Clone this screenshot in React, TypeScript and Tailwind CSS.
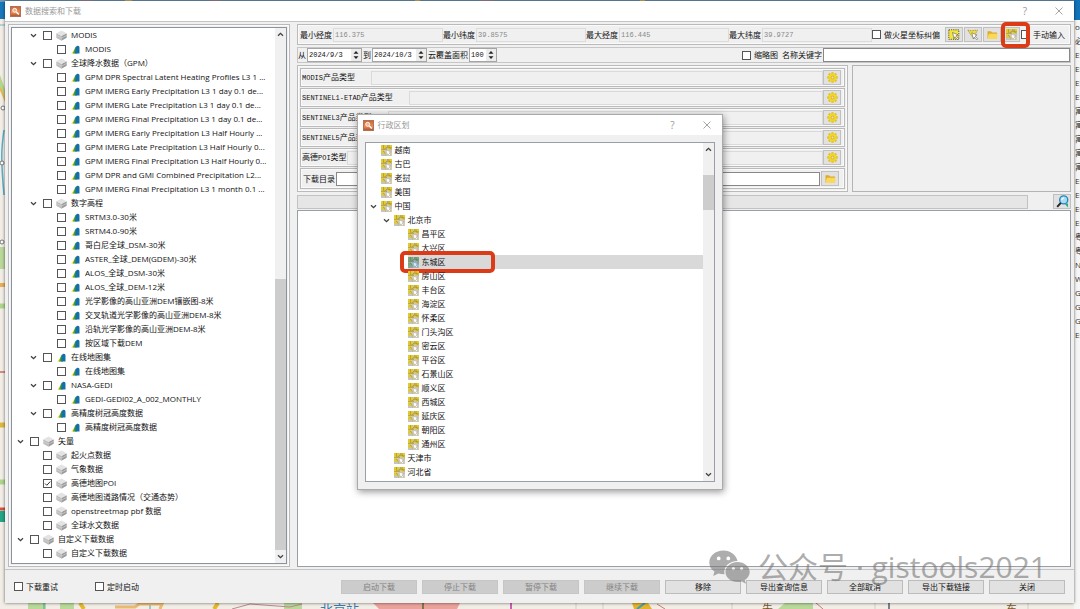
import React, { useState } from "react";

type IconKind = "layers" | "leaf";

interface TreeRow {
  level: number;
  label: string;
  icon: IconKind;
  open?: boolean;
  checked?: boolean;
}

const indent = ["pl-[5px]", "pl-[18px]", "pl-[32px]"];

const group = (level: number, label: string, icon: IconKind = "layers"): TreeRow => ({
  level,
  label,
  icon,
  open: true,
});

const leaf = (label: string): TreeRow => ({ level: 2, label, icon: "leaf" });

const vector = (label: string, checked = false): TreeRow => ({
  level: 1,
  label,
  icon: "layers",
  checked,
});

const dataTree: TreeRow[] = [
  group(1, "MODIS"),
  leaf("MODIS"),
  group(1, "全球降水数据（GPM）"),
  leaf("GPM DPR Spectral Latent Heating Profiles L3 1 ..."),
  leaf("GPM IMERG Early Precipitation L3 1 day 0.1 de..."),
  leaf("GPM IMERG Late Precipitation L3 1 day 0.1 de..."),
  leaf("GPM IMERG Final Precipitation L3 1 day 0.1 de..."),
  leaf("GPM IMERG Early Precipitation L3 Half Hourly ..."),
  leaf("GPM IMERG Late Precipitation L3 Half Hourly 0..."),
  leaf("GPM IMERG Final Precipitation L3 Half Hourly 0..."),
  leaf("GPM DPR and GMI Combined Precipitation L2..."),
  leaf("GPM IMERG Final Precipitation L3 1 month 0.1 ..."),
  group(1, "数字高程"),
  leaf("SRTM3.0-30米"),
  leaf("SRTM4.0-90米"),
  leaf("哥白尼全球_DSM-30米"),
  leaf("ASTER_全球_DEM(GDEM)-30米"),
  leaf("ALOS_全球_DSM-30米"),
  leaf("ALOS_全球_DEM-12米"),
  leaf("光学影像的高山亚洲DEM镶嵌图-8米"),
  leaf("交叉轨道光学影像的高山亚洲DEM-8米"),
  leaf("沿轨光学影像的高山亚洲DEM-8米"),
  leaf("按区域下载DEM"),
  group(1, "在线地图集", "leaf"),
  leaf("在线地图集"),
  group(1, "NASA-GEDI", "leaf"),
  leaf("GEDI-GEDI02_A_002_MONTHLY"),
  group(1, "高精度树冠高度数据", "leaf"),
  leaf("高精度树冠高度数据"),
  group(0, "矢量"),
  vector("起火点数据"),
  vector("气象数据"),
  vector("高德地图POI", true),
  vector("高德地图道路情况（交通态势）"),
  vector("openstreetmap pbf 数据"),
  vector("全球水文数据"),
  group(0, "自定义下载数据"),
  vector("自定义下载数据"),
];

const regions = [
  { level: 0, label: "越南" },
  { level: 0, label: "古巴" },
  { level: 0, label: "老挝" },
  { level: 0, label: "美国" },
  { level: 0, label: "中国", open: true },
  { level: 1, label: "北京市", open: true },
  { level: 2, label: "昌平区" },
  { level: 2, label: "大兴区" },
  { level: 2, label: "东城区" },
  { level: 2, label: "房山区" },
  { level: 2, label: "丰台区" },
  { level: 2, label: "海淀区" },
  { level: 2, label: "怀柔区" },
  { level: 2, label: "门头沟区" },
  { level: 2, label: "密云区" },
  { level: 2, label: "平谷区" },
  { level: 2, label: "石景山区" },
  { level: 2, label: "顺义区" },
  { level: 2, label: "西城区" },
  { level: 2, label: "延庆区" },
  { level: 2, label: "朝阳区" },
  { level: 2, label: "通州区" },
  { level: 1, label: "天津市" },
  { level: 1, label: "河北省" },
];

const products = [
  { latin: "MODIS", rest: "产品类型" },
  { latin: "SENTINEL1-ETAD", rest: "产品类型" },
  { latin: "SENTINEL3", rest: "产品类型" },
  { latin: "SENTINEL5", rest: "产品类型" },
];

const actions = [
  { label: "启动下载", disabled: true },
  { label: "停止下载", disabled: true },
  { label: "暂停下载", disabled: true },
  { label: "继续下载", disabled: true },
  { label: "移除" },
  { label: "导出查询信息" },
  { label: "全部取消" },
  { label: "导出下载链接" },
  { label: "关闭" },
];

const desktopList = [
  "op", "必", "ES", "ES", "ES", "ES", "寓", "寓", "寓", "寓", "寓", "Es",
  "Es", "Es", "Es", "粤", "粤", "N", "W", "Gl", "Gl", "Gl", "Es",
];

const frame = "border border-[#bababa] shadow-[inset_0_0_0_1px_#fafafa]";
const mono = "font-['Liberation_Mono','Noto_Sans_CJK_SC',monospace] text-[7px]";

const Chevron = ({ up = false }: { up?: boolean }) => (
  <svg className={up ? "size-[7px] rotate-180" : "size-[7px]"} viewBox="0 0 7 7" fill="none">
    <path d="M1 2.2 3.5 4.7 6 2.2" stroke="#404040" strokeWidth="1.3" />
  </svg>
);

const AppIcon = () => (
  <svg className="size-[11px] shrink-0" viewBox="0 0 11 11">
    <defs>
      <linearGradient id="appFill" x1="0" y1="0" x2="0" y2="1">
        <stop offset="0" stopColor="#c9653a" />
        <stop offset=".6" stopColor="#ee8a4e" />
        <stop offset="1" stopColor="#a8502d" />
      </linearGradient>
    </defs>
    <rect x=".5" y=".5" width="10" height="10" fill="url(#appFill)" stroke="#b0715a" />
    <circle cx="4.7" cy="4.3" r="2" fill="#f3b18d" stroke="#fff" strokeWidth=".9" />
    <path d="m6.3 6 2.5 2.6" stroke="#fff" strokeWidth="1.4" />
  </svg>
);

const LayersIcon = () => (
  <svg className="size-[11px] shrink-0" viewBox="0 0 11 11">
    <path d="M.3 3.2v4.6l5.2 2.9V5.8z" fill="#bdbdbd" />
    <path d="M10.700 3.2v4.600L5.500 10.700V5.800z" fill="#9c9c9c" />
    <path d="M5.500.6.300 3.200l5.200 2.700 5.200-2.700z" fill="#e3e3e3" />
    <path d="m.3 5.400 5.200 2.700 5.200-2.700" stroke="#d8d8d8" strokeWidth=".6" fill="none" />
  </svg>
);

const LeafIcon = () => (
  <svg className="size-[9px] shrink-0" viewBox="0 0 9 9">
    <path d="M.2 8.600C2 7 2.600 5.500 3.200 4L4.200 8.600z" fill="#e8d51c" />
    <path d="M2 8.600C3.300 6 3.200 3.200 5 1.500l1 7.100z" fill="#3f9b3c" />
    <path d="M4 8.600C4.800 5.500 4 1 6.500.7c1.400-.2 2 .6 2 2v5.900z" fill="#1670a8" />
  </svg>
);

const RegionIcon = ({ active = false }: { active?: boolean }) => (
  <svg className="size-[11px] shrink-0" viewBox="0 0 11 11">
    <rect width="11" height="11" fill={active ? "#a9b9b4" : "#d6cfae"} />
    <path
      d="M0 0h5v4H0zM6.500 0H11v3.500L7.500 5zM0 5.500h3L4.500 9H0zM4.500 4.500 7 6v2z"
      fill={active ? "#7fa672" : "#e2c92c"}
    />
    <path
      d="M2.500 0v3.500L5.500 5l1-5M0 4.500h3.500L6 2l5 1M4 11V7.500L2 6M8 0v2.500L11 5"
      stroke={active ? "#56796e" : "#a18b2a"}
      strokeWidth=".6"
      fill="none"
    />
    <path d="M0 8.500h4v2.500H0zM8.500 4.500H11v3H8.500z" fill={active ? "#8ea2a6" : "#c4c4c0"} />
    <path d="m5 5 5 2-2 1 2 2-1 .8-2-2-.8 1.600z" fill={active ? "#d5ecfa" : "#fff"} stroke={active ? "#5b93bb" : "#9a9a9a"} strokeWidth=".4" />
  </svg>
);

const GearIcon = () => (
  <svg className="size-[11px]" viewBox="0 0 11 11">
    <g fill="#e4bd16">
      <rect x="4.300" y=".2" width="2.400" height="10.600" rx=".6" />
      <rect x="4.300" y=".2" width="2.400" height="10.600" rx=".6" transform="rotate(45 5.5 5.5)" />
      <rect x="4.300" y=".2" width="2.400" height="10.600" rx=".6" transform="rotate(90 5.5 5.5)" />
      <rect x="4.300" y=".2" width="2.400" height="10.600" rx=".6" transform="rotate(135 5.5 5.5)" />
    </g>
    <circle cx="5.500" cy="5.500" r="4" fill="#f0d52c" />
    <circle cx="5.500" cy="5.500" r="1.300" fill="#e8e6da" stroke="#c49c12" strokeWidth=".6" />
  </svg>
);

const FolderIcon = () => (
  <svg className="h-[10px] w-[11px]" viewBox="0 0 11 10">
    <path d="M.5 9V1.200h3.500l1 1.200h5V9z" fill="#dfab2c" />
    <path d="M.5 9 1.800 3.700h9L9.800 9z" fill="#fad958" />
  </svg>
);

const SelectIcon = () => (
  <svg className="size-[12px]" viewBox="0 0 12 12">
    <rect x=".8" y=".8" width="10" height="9.500" fill="#f5e53c" stroke="#4a4a35" strokeWidth=".9" strokeDasharray="1.2 1" />
    <path d="m4.500 3.500 5.500 2.300-2 1 2.600 2.800-1 1L7 7.700l-1 2z" fill="#fff" stroke="#555" strokeWidth=".6" />
  </svg>
);

const LassoIcon = () => (
  <svg className="size-[12px]" viewBox="0 0 12 12">
    <path d="m.8 1 3.500.8L10.500 1 8.500 5 7 9.500 3.500 5.500z" fill="#f0dc3a" stroke="#8d8440" strokeWidth=".7" strokeDasharray="1.500 .8" />
    <path d="m4.800 3.800 5.300 2.200-2 1 2.700 2.800-1 1-2.500-2.800-1 2z" fill="#fff" stroke="#666" strokeWidth=".6" />
  </svg>
);

const SearchIcon = () => (
  <svg className="size-[13px]" viewBox="0 0 13 13">
    <circle cx="7.700" cy="4.900" r="4" fill="#a9dcf3" stroke="#2785bd" strokeWidth="1.400" />
    <path d="M5.600 5.200c.2-1.500 1-2.200 2.400-2.400" stroke="#fff" strokeWidth="1.200" fill="none" />
    <path d="m4.800 7.800-3.600 4" stroke="#272727" strokeWidth="2" />
    <path d="M8.500 8.500H12v4z" fill="#29aa87" />
  </svg>
);

const Checkbox = ({ checked = false }: { checked?: boolean }) => (
  <span className="relative flex size-[9px] shrink-0">
    <input
      type="checkbox"
      defaultChecked={checked}
      className="peer size-[9px] appearance-none border border-[#555] bg-white"
    />
    <svg className="pointer-events-none absolute inset-0 hidden peer-checked:block" viewBox="0 0 9 9" fill="none">
      <path d="m2 4.500 1.800 1.800L7.300 2.500" stroke="#333" strokeWidth="1" />
    </svg>
  </span>
);

const ToolButton = ({ title, children }: { title: string; children: React.ReactNode }) => (
  <button
    aria-label={title}
    className="flex h-[15px] w-[18px] shrink-0 items-center justify-center border border-[#c0c0c0] bg-[#e1e1e1]"
  >
    {children}
  </button>
);

const ScrollBar = ({ thumb }: { thumb: string }) => (
  <div className="flex w-[11px] shrink-0 flex-col items-center bg-[#f0f0f0]">
    <button aria-label="向上" className="flex h-[13px] items-center">
      <Chevron up />
    </button>
    <div className={`flex w-full flex-1 flex-col ${thumb}`}>
      <div className="min-h-[35px] w-full bg-[#cdcdcd]" />
    </div>
    <button aria-label="向下" className="flex h-[13px] items-center">
      <Chevron />
    </button>
  </div>
);

const Coordinate = ({ label, value }: { label: string; value: string }) => (
  <label className="flex min-w-0 flex-1 items-center gap-px">
    <span className="shrink-0">{label}</span>
    <input
      disabled
      defaultValue={value}
      className={`h-[14px] min-w-0 flex-1 border border-[#dcdcdc] px-px text-[#888] ${mono}`}
    />
  </label>
);

const Spinner = ({ label, value, width }: { label: string; value: string; width: string }) => (
  <label className="flex items-center gap-px">
    <span>{label}</span>
    <span className={`flex h-[14px] border border-[#a5a5a5] bg-white ${width}`}>
      <input defaultValue={value} className={`min-w-0 flex-1 px-px ${mono}`} />
      <button aria-label={`${label} 调整`} className="flex w-[10px] items-center justify-center bg-[#ececec]">
        <svg className="h-[10px] w-[6px]" viewBox="0 0 6 10">
          <path d="M.5 3.800 3 1l2.500 2.800zM.5 6.200 3 9l2.500-2.800z" fill="#222" />
        </svg>
      </button>
    </span>
  </label>
);

const Desktop = () => (
  <div className="absolute inset-0 overflow-hidden bg-[#f2eee6]" aria-hidden="true">
    <svg className="size-full" viewBox="0 0 1080 609" preserveAspectRatio="none">
      <path d="M0 0h1080v2H0z" fill="#6e96b8" />
      <path d="M80 0h12v2H80zM210 0h10v2h-10zM480 0h14v2h-14z" fill="#a08c9c" />
      <path d="M125 0h7v2h-7zM415 0h5v2h-5zM640 0h5v2h-5z" fill="#d8b85c" />
      <path d="M0 2h6v17H0z" fill="#1878ba" />
      <path d="M0 25h6" stroke="#72b6cf" />
      <path d="M0 75 6 92v10L0 88z" fill="#b6d68b" />
      <path d="m0 88 6 14" stroke="#e9b957" strokeWidth="2" />
      <path d="M4 130c-3 20-3 30 0 65" stroke="#59aecb" strokeWidth="1.500" fill="none" />
      <circle cx="3" cy="108" r="2" fill="#fff" stroke="#777" />
      <circle cx="2" cy="163" r="2" fill="#fff" stroke="#777" />
      <circle cx="2" cy="242" r="2" fill="#fff" stroke="#777" />
      <path d="M0 247h6v22H0z" fill="#b9d899" />
      <path d="M0 285h6" stroke="#e8ad55" strokeWidth="4" />
      <path d="M0 306h6M0 482h6" stroke="#add58b" strokeWidth="5" />
      <path d="M0 372h6" stroke="#c46c62" strokeWidth="1.500" />
      <path d="M0 425h6" stroke="#deb83c" strokeWidth="5" />
      <path d="M0 509h6" stroke="#d8503e" strokeWidth="3" />
      <path d="M0 511h6v11H0z" fill="#24a585" />
      <path d="M28 603h18v6H28zM60 603h14v6H60zM284 603h18v6h-18zM785 603h28v6h-35z" fill="#b9d99a" />
      <path d="m80 603 4 6M218 603l-4 6" stroke="#e3b72f" strokeWidth="4" />
      <path d="M44 603v6M150 603v6" stroke="#41a3b7" />
      <path d="M115 607h20l4-3h23l-2 5" stroke="#e9ba72" strokeWidth="3" fill="none" />
      <path d="m232 609 18-5 40 3 12-3" stroke="#bd8790" fill="none" />
      <path d="M373 603h87l-3 6h-78z" fill="#eaa39b" />
      <path d="M423 603v6" stroke="#857446" strokeWidth="2" />
      <path d="M511 603v6" stroke="#c760af" strokeWidth="2" />
      <path d="M576 603v6M603 603v6M732 603v6M875 603v6M1028 603v6" stroke="#d3cec5" />
      <path d="M632 603h16l4 6h-18z" fill="#e3b42c" />
      <path d="m637 609 8-6" stroke="#429db7" strokeWidth="2" />
      <path d="m657 604 8 5M816 603l7 6" stroke="#c77a70" />
      <path d="M889 603v6" stroke="#7b8090" strokeWidth="2" />
      <text x="320" y="614" fontSize="13" fill="#397bb0" fontFamily="Noto Sans CJK SC">北京站</text>
      <text x="762" y="613" fontSize="11" fill="#7b592c" fontFamily="Noto Sans CJK SC">朱</text>
      <text x="1006" y="613" fontSize="11" fill="#7b592c" fontFamily="Noto Sans CJK SC">东</text>
    </svg>
    <div className="absolute top-0 right-0 h-full w-[6px] overflow-hidden bg-[#f6f6f6]">
      <div className="h-[20px] bg-[#1274b9]" />
      {desktopList.map((text, i) => (
        <div key={i} className="h-[14px] pl-px text-[8px] leading-[14px] whitespace-nowrap text-[#333]">
          {text}
        </div>
      ))}
    </div>
  </div>
);

const TitleBar = ({ title }: { title: string }) => (
  <header className="flex h-[20px] shrink-0 items-center gap-1 bg-white pr-[10px] pl-[5px] text-[#999]">
    <AppIcon />
    <h1 className="flex-1">{title}</h1>
    <button aria-label="帮助" className="w-[10px] text-[10px]">?</button>
    <button aria-label="关闭窗口" className="ml-5 flex w-[10px] justify-center">
      <svg className="size-[8px]" viewBox="0 0 8 8">
        <path d="m.5.5 7 7m0-7-7 7" stroke="#999" strokeWidth=".9" />
      </svg>
    </button>
  </header>
);

const DataTree = () => (
  <div className={`flex w-[282px] shrink-0 p-[2px] ${frame}`}>
    <div className="flex min-w-0 flex-1 border border-[#8d939c] bg-white">
      <ul className="flex min-w-0 flex-1 flex-col justify-between pb-[3px]">
        {dataTree.map((row, i) => (
          <li key={i} className={`flex h-[14px] items-center ${indent[row.level]}`}>
            <span className="flex w-[13px] shrink-0">
              {row.open && (
                <button aria-label={`收起 ${row.label}`}>
                  <Chevron />
                </button>
              )}
            </span>
            <label className="flex min-w-0 items-center whitespace-nowrap">
              <Checkbox checked={row.checked} />
              <span className="mr-[4px] ml-[4px] flex w-[11px] justify-center">
                {row.icon === "leaf" ? <LeafIcon /> : <LayersIcon />}
              </span>
              {row.label}
            </label>
          </li>
        ))}
      </ul>
      <ScrollBar thumb="pt-[238px] *:flex-1" />
    </div>
  </div>
);

const Filters = () => (
  <>
    <div className={`flex h-[21px] items-center px-[2px] ${frame}`}>
      <Coordinate label="最小经度" value="116.375" />
      <Coordinate label="最小纬度" value="39.8575" />
      <Coordinate label="最大经度" value="116.445" />
      <Coordinate label="最大纬度" value="39.9727" />
      <label className="mr-[5px] flex items-center gap-[3px]">
        <Checkbox />
        做火星坐标纠偏
      </label>
      <div className="flex gap-px">
        <ToolButton title="框选"><SelectIcon /></ToolButton>
        <ToolButton title="多边形"><LassoIcon /></ToolButton>
        <ToolButton title="打开"><FolderIcon /></ToolButton>
        <span className="relative flex">
          <ToolButton title="行政区划"><RegionIcon /></ToolButton>
          <span className="pointer-events-none absolute -top-[5px] -left-[1px] z-10 h-[26px] w-[29px] rounded-[5px] border-4 border-[#dc3b17]" />
        </span>
      </div>
      <label className="mr-[3px] ml-px flex items-center gap-[3px]">
        <Checkbox />
        手动输入
      </label>
    </div>
    <div className="mt-[2px] flex h-[16px] items-center gap-px border border-[#c6c6c6]">
      <Spinner label="从" value="2024/9/3" width="w-[55px]" />
      <Spinner label="到" value="2024/10/3" width="w-[55px]" />
      <Spinner label="云覆盖面积" value="100" width="w-[28px]" />
      <span className="flex-1" />
      <label className="mr-[3px] flex items-center gap-[3px]">
        <Checkbox />
        缩略图
      </label>
      <label className="flex items-center gap-px">
        名称关键字
        <input className="h-[14px] w-[247px] border border-[#888] bg-white px-1" />
      </label>
    </div>
  </>
);

const ProductPanel = () => (
  <div className={`flex w-[551px] flex-col gap-px p-[2px] ${frame}`}>
    {products.map((p) => (
      <label key={p.latin} className={`flex h-[19px] items-center pr-[3px] pl-px ${frame}`}>
        <span className="mr-4 shrink-0">
          <span className={mono}>{p.latin}</span>
          {p.rest}
        </span>
        <input disabled className="h-[14px] min-w-0 flex-1 border border-[#dadada]" />
        <ToolButton title={`${p.latin} 设置`}><GearIcon /></ToolButton>
      </label>
    ))}
    <label className={`flex h-[19px] items-center pr-[3px] pl-px ${frame}`}>
      <span className="shrink-0">
        高德<span className={mono}>POI</span>类型
      </span>
      <input disabled className="h-[14px] min-w-0 flex-1 border border-[#dadada]" />
      <ToolButton title="高德 设置"><GearIcon /></ToolButton>
    </label>
    <label className={`flex h-[21px] items-center gap-px pr-[5px] pl-[2px] ${frame}`}>
      <span className="shrink-0">下载目录</span>
      <input className="h-[14px] min-w-0 flex-1 border border-[#888] bg-white" />
      <ToolButton title="选择目录"><FolderIcon /></ToolButton>
    </label>
  </div>
);

const RegionDialog = () => {
  const [selected, setSelected] = useState("东城区");

  return (
    <div className="pointer-events-none absolute inset-0 flex items-center justify-center">
      <section
        role="dialog"
        aria-label="行政区划"
        className="pointer-events-auto flex w-[366px] flex-col border border-[#aaa] bg-[#f0f0f0] shadow-[1px_2px_7px_rgba(0,0,0,0.4)]"
      >
        <TitleBar title="行政区划" />
        <div className="m-[7px] flex border border-[#9a9ea6] bg-white">
          <ul className="flex min-w-0 flex-1 flex-col pb-[2px]">
            {regions.map((r) => (
              <li key={r.label} className={`flex h-[14px] items-center ${indent[r.level].replace("5px", "5px")}`}>
                <span className="flex w-[10px] shrink-0">
                  {r.open && (
                    <button aria-label={`收起 ${r.label}`} className="-ml-px">
                      <Chevron />
                    </button>
                  )}
                </span>
                <button
                  onClick={() => setSelected(r.label)}
                  className={`relative flex h-full flex-1 items-center gap-[3px] ${r.label === selected ? "bg-[#d9d9d9]" : ""}`}
                >
                  <RegionIcon active={r.label === selected} />
                  {r.label}
                  {r.label === selected && (
                    <span className="absolute -top-[4px] -left-[8px] h-[22px] w-[95px] rounded-[5px] border-4 border-[#dc3b17]" />
                  )}
                </button>
              </li>
            ))}
          </ul>
          <ScrollBar thumb="pt-[19px]" />
        </div>
      </section>
    </div>
  );
};

const Watermark = () => (
  <div className="pointer-events-none absolute right-[27px] bottom-[14px] flex items-center gap-[8px] text-[30px] leading-[44px] whitespace-nowrap text-[#777] opacity-60">
    <svg className="h-[34px] w-[41px]" viewBox="0 0 41 34">
      <path
        fill="currentColor"
        fillRule="evenodd"
        d="M14.500.5C6.500.5.300 5.800.300 12.400c0 3.700 2 7 5.200 9.200L4.200 26l5.100-2.600c1.900.5 4 .8 6.200.8-1.600-7.500 5-13.200 13-13.200C27.200 5 21.400.500 14.500.500zM9.700 6.500a1.900 1.900 0 1 1 0 3.800 1.900 1.900 0 0 1 0-3.800zm9.600 0a1.900 1.900 0 1 1 0 3.800 1.900 1.900 0 0 1 0-3.800z"
      />
      <path
        fill="currentColor"
        fillRule="evenodd"
        d="M28.500 12c-6.700 0-12 4.500-12 10s5.300 10 12 10c1.500 0 2.900-.2 4.200-.6l4.300 2.300-1.200-3.700c3-1.900 4.900-4.700 4.900-8 0-5.500-5.500-10-12.200-10zm-4.100 5a1.600 1.600 0 1 1 0 3.200 1.600 1.600 0 0 1 0-3.200zm8.200 0a1.600 1.600 0 1 1 0 3.200 1.600 1.600 0 0 1 0-3.200z"
      />
    </svg>
    <span>公众号 · gistools2021</span>
  </div>
);

export default function App() {
  return (
    <div className="relative flex h-screen pt-px pr-[6px] pb-[6px] pl-[5px] font-['Open_Sans','Noto_Sans_CJK_SC',sans-serif] text-[8px] leading-[12px] text-[#111]">
      <Desktop />
      <main className="relative flex min-w-0 flex-1 flex-col bg-[#f0f0f0] shadow-[0_0_3px_rgba(0,0,0,0.6)]">
        <TitleBar title="数据搜索和下载" />
        <div className="flex min-h-0 flex-1 gap-[7px] border-y border-[#c4c4c4] px-[3px] pt-[2px] pb-[2px]">
          <DataTree />
          <div className="flex min-w-0 flex-1 flex-col">
            <Filters />
            <div className="mt-[2px] flex gap-[4px]">
              <ProductPanel />
              <div className="flex-1 border border-[#b4b4b4]" />
            </div>
            <div className="mt-[2px] flex items-center justify-between">
              <div className="mr-[25px] h-[14px] flex-1 border border-[#c2c2c2] bg-[#e6e6e6]" />
              <ToolButton title="搜索"><SearchIcon /></ToolButton>
            </div>
            <div className="mt-px flex-1 border border-[#9a9ea6] bg-white" />
          </div>
        </div>
        <footer className="flex h-[33px] shrink-0 items-center pr-[9px] pl-[9px]">
          <label className="flex w-[81px] items-center gap-[3px]">
            <Checkbox />
            下载重试
          </label>
          <label className="flex items-center gap-[3px]">
            <Checkbox />
            定时启动
          </label>
          <div className="ml-auto flex gap-[5px]">
            {actions.map((a) => (
              <button
                key={a.label}
                disabled={a.disabled}
                className="h-[14px] w-[76px] border border-[#bcbcbc] bg-[#e1e1e1] leading-[12px] disabled:border-[#c6c6c6] disabled:bg-[#cccccc] disabled:text-[#838383]"
              >
                {a.label}
              </button>
            ))}
          </div>
        </footer>
        <RegionDialog />
        <Watermark />
      </main>
    </div>
  );
}
